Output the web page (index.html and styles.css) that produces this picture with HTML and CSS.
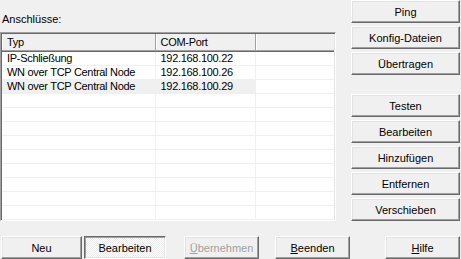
FILE: index.html
```html
<!DOCTYPE html>
<html lang="de">
<head>
    <meta charset="UTF-8">
    <meta name="viewport" content="width=device-width, initial-scale=1.0">
    <title>Anschlüsse</title>
    <link rel="stylesheet" href="styles.css">
</head>
<body>
    <div class="dialog">
        <div class="main">
            <div class="left">
                <div class="caption">Anschlüsse:</div>
                <!-- Liste der Anschlüsse -->
                <div class="list">
                    <table class="grid">
                        <colgroup>
                            <col class="col-typ">
                            <col class="col-port">
                            <col>
                        </colgroup>
                        <thead>
                            <tr><th>Typ</th><th>COM-Port</th><th></th></tr>
                        </thead>
                        <tbody>
                            <tr><td>IP-Schließung</td><td>192.168.100.22</td><td></td></tr>
                            <tr><td>WN over TCP Central Node</td><td>192.168.100.26</td><td></td></tr>
                            <tr class="sel"><td>WN over TCP Central Node</td><td>192.168.100.29</td><td></td></tr>
                            <tr><td></td><td></td><td></td></tr>
                            <tr><td></td><td></td><td></td></tr>
                            <tr><td></td><td></td><td></td></tr>
                            <tr><td></td><td></td><td></td></tr>
                            <tr><td></td><td></td><td></td></tr>
                            <tr><td></td><td></td><td></td></tr>
                            <tr><td></td><td></td><td></td></tr>
                            <tr><td></td><td></td><td></td></tr>
                            <tr><td></td><td></td><td></td></tr>
                        </tbody>
                    </table>
                </div>
            </div>
            <div class="side">
                <div class="group">
                    <button class="btn">Ping</button>
                    <button class="btn">Konfig-Dateien</button>
                    <button class="btn">Übertragen</button>
                </div>
                <div class="group group-low">
                    <button class="btn">Testen</button>
                    <button class="btn">Bearbeiten</button>
                    <button class="btn">Hinzufügen</button>
                    <button class="btn">Entfernen</button>
                    <button class="btn">Verschieben</button>
                </div>
            </div>
        </div>
        <!-- untere Knopfleiste -->
        <div class="footer">
            <button class="btn btn-neu">Neu</button>
            <button class="btn btn-edit pressed">Bearbeiten</button>
            <button class="btn btn-apply" disabled><u>Ü</u>bernehmen</button>
            <button class="btn btn-quit"><u>B</u>eenden</button>
            <button class="btn btn-help"><u>H</u>ilfe</button>
        </div>
    </div>
</body>
</html>
```

FILE: styles.css
```css
*{
    margin: 0;
    padding: 0;
    box-sizing: border-box;
}
body{
    background-color: #f0f0f0;
    font-family: "Liberation Sans", Arial, sans-serif;
    font-size: 11px;
    color: #000;
    width: 461px;
    height: 259px;
    overflow: hidden;
}
.main{
    display: flex;
    height: 221px;
}
.left{
    width: 336px;
}
.caption{
    height: 32px;
    padding: 12px 0 0 2px;
    line-height: 14px;
}
/* eingesunkener Rahmen der Liste */
.list{
    height: 189px;
    background-color: #fff;
    border: 1px solid;
    border-color: #a0a0a0 #fff #fff #a0a0a0;
    box-shadow: inset 1px 1px #696969, inset -1px -1px #e3e3e3;
    padding: 1px;
    overflow: hidden;
}
.grid{
    width: 100%;
    table-layout: fixed;
    border-collapse: collapse;
    letter-spacing: -0.3px;
}
.col-typ{
    width: 153px;
}
.col-port{
    width: 100px;
}
.grid th{
    height: 17px;
    font-weight: normal;
    text-align: left;
    padding: 0 5px;
    background-color: #f0f0f0;
    border-right: 1px solid #a0a0a0;
    border-bottom: 1px solid #696969;
    box-shadow: inset 0 -1px #a0a0a0, inset 1px 0 #fff;
    line-height: 14px;
}
.grid th:last-child{
    border-right: none;
}
.grid td{
    height: 14px;
    padding: 0 5px;
    line-height: 13px;
    white-space: nowrap;
    border-right: 1px solid #f0f0f0;
    border-bottom: 1px solid #f0f0f0;
}
.grid td:last-child{
    border-right: none;
}
.grid .sel td{
    background-color: #f0f0f0;
}
.grid .sel td:last-child{
    background-color: #fff;
}
.side{
    margin-left: 15px;
    width: 109px;
    display: flex;
    flex-direction: column;
}
.group{
    display: flex;
    flex-direction: column;
    gap: 3px;
}
.group-low{
    margin-top: 19px;
}
/* klassischer Windows-Knopf */
.btn{
    height: 23px;
    font-family: inherit;
    font-size: 11px;
    color: #000;
    background-color: #f0f0f0;
    border: 1px solid;
    border-color: #fff #696969 #696969 #fff;
    box-shadow: inset -1px -1px #a0a0a0, inset 1px 1px #e3e3e3;
    line-height: 14px;
    text-align: center;
}
.btn u{
    text-decoration: underline;
}
.btn:disabled{
    color: #a0a0a0;
}
.pressed{
    border-color: #696969 #fff #fff #696969;
    box-shadow: inset 1px 1px #a0a0a0, inset -1px -1px #e3e3e3;
    background: repeating-conic-gradient(#fff 0 25%, #ececec 0 50%) 0 0 / 2px 2px;
}
.footer{
    display: flex;
    margin-top: 15px;
}
.btn-neu{
    width: 81px;
    margin-left: 1px;
}
.btn-edit{
    width: 82px;
    margin-left: 2px;
}
.btn-apply{
    width: 75px;
    margin-left: 18px;
}
.btn-quit{
    width: 75px;
    margin-left: 16px;
}
.btn-help{
    width: 75px;
    margin-left: 35px;
}
```
